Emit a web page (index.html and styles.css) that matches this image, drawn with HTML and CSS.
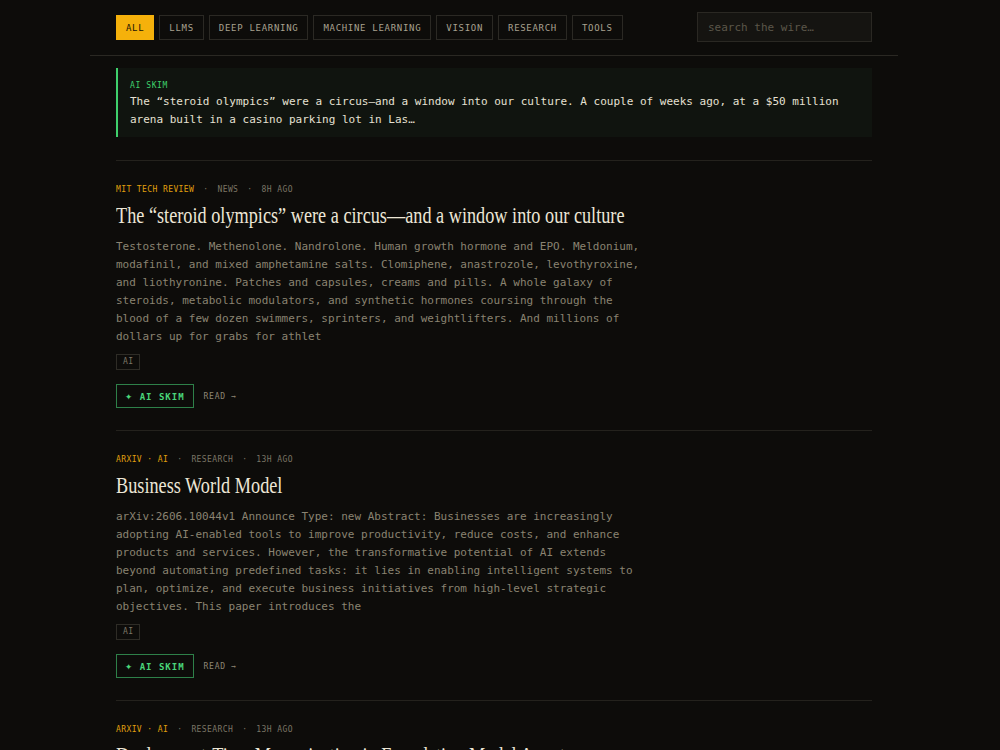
FILE: index.html
```html
<!DOCTYPE html>
<html>
<head>
<title>The Wire</title>
<link rel="stylesheet" href="styles.css">
</head>
<body>
<div class="page">
  <div class="header">
    <div class="tabs">
      <button class="tab active">ALL</button>
      <button class="tab">LLMS</button>
      <button class="tab">DEEP LEARNING</button>
      <button class="tab">MACHINE LEARNING</button>
      <button class="tab">VISION</button>
      <button class="tab">RESEARCH</button>
      <button class="tab">TOOLS</button>
    </div>
    <input type="text" class="search" placeholder="search the wire…">
  </div>

  <div class="main">
    <div class="skim">
      <div class="skim-label">AI SKIM</div>
      <div class="skim-text">The “steroid olympics” were a circus—and a window into our culture. A couple of weeks ago, at a $50 million arena built in a casino parking lot in Las…</div>
    </div>

    <div class="article">
      <div class="meta">
        <span class="source">MIT TECH REVIEW</span>
        <span class="dot">·</span>
        <span>NEWS</span>
        <span class="dot">·</span>
        <span>8H AGO</span>
      </div>
      <div class="title"><span>The “steroid olympics” were a circus—and a window into our culture</span></div>
      <div class="excerpt">Testosterone. Methenolone. Nandrolone. Human growth hormone and EPO. Meldonium, modafinil, and mixed amphetamine salts. Clomiphene, anastrozole, levothyroxine, and liothyronine. Patches and capsules, creams and pills. A whole galaxy of steroids, metabolic modulators, and synthetic hormones coursing through the blood of a few dozen swimmers, sprinters, and weightlifters. And millions of dollars up for grabs for athlet</div>
      <div class="tags"><span class="tag">AI</span></div>
      <div class="actions">
        <button class="skim-btn"><span class="spark">✦</span> AI SKIM</button>
        <a class="read">READ →</a>
      </div>
    </div>

    <div class="article">
      <div class="meta">
        <span class="source">ARXIV · AI</span>
        <span class="dot">·</span>
        <span>RESEARCH</span>
        <span class="dot">·</span>
        <span>13H AGO</span>
      </div>
      <div class="title"><span>Business World Model</span></div>
      <div class="excerpt">arXiv:2606.10044v1 Announce Type: new Abstract: Businesses are increasingly adopting AI-enabled tools to improve productivity, reduce costs, and enhance products and services. However, the transformative potential of AI extends beyond automating predefined tasks: it lies in enabling intelligent systems to plan, optimize, and execute business initiatives from high-level strategic objectives. This paper introduces the</div>
      <div class="tags"><span class="tag">AI</span></div>
      <div class="actions">
        <button class="skim-btn"><span class="spark">✦</span> AI SKIM</button>
        <a class="read">READ →</a>
      </div>
    </div>

    <div class="article">
      <div class="meta">
        <span class="source">ARXIV · AI</span>
        <span class="dot">·</span>
        <span>RESEARCH</span>
        <span class="dot">·</span>
        <span>13H AGO</span>
      </div>
      <div class="title"><span>Deployment-Time Memorization in Foundation Model Agents</span></div>
      <div class="excerpt">arXiv:2606.10051v1 Announce Type: new Abstract: Foundation model agents increasingly operate over long horizons.</div>
    </div>
  </div>
</div>
</body>
</html>
```

FILE: styles.css
```css
body {
  margin: 0;
  padding-right: 12px;
  background-color: #0d0c0a;
  color: #e8e3d5;
  font-family: "DejaVu Sans Mono", "Liberation Mono", monospace;
  overflow: hidden;
}

.page {
  max-width: 808px;
  margin: 0 auto;
}

.header {
  display: flex;
  justify-content: space-between;
  align-items: center;
  padding: 12px 26px 13px;
  border-bottom: 1px solid #2a2823;
}

.tabs {
  display: flex;
  gap: 5px;
  padding-top: 1px;
}

.tab {
  height: 25px;
  padding: 0 9px;
  background: transparent;
  border: 1px solid #2b2924;
  color: #a8a18f;
  font-family: inherit;
  font-size: 9px;
  letter-spacing: 0.7px;
  cursor: pointer;
}

.tab.active {
  background-color: #f5b10b;
  border-color: #f5b10b;
  color: #1a1406;
}

.search {
  width: 175px;
  height: 30px;
  box-sizing: border-box;
  padding: 0 10px;
  background-color: #151411;
  border: 1px solid #2a2823;
  color: #e8e3d5;
  font-family: inherit;
  font-size: 11px;
  outline: none;
}

.search::placeholder {
  color: #5b5649;
}

.main {
  padding: 12px 26px 0;
}

.skim {
  background-color: #10140f;
  border-left: 2px solid #3fd06c;
  padding: 12px 14px 8px 12px;
  margin-bottom: 23px;
}

.skim-label {
  color: #3fd06c;
  font-size: 8px;
  letter-spacing: 0.6px;
  line-height: 12px;
  margin-bottom: 1px;
}

.skim-text {
  font-size: 11px;
  line-height: 18px;
  color: #e6e1d3;
}

.article {
  border-top: 1px solid #24221d;
  padding: 23px 0 22px;
}

.meta {
  display: flex;
  gap: 9px;
  font-size: 8px;
  letter-spacing: 0.4px;
  line-height: 12px;
  color: #7b7565;
}

.source {
  color: #e0a00e;
}

.title {
  margin-top: 5px;
  font-family: "Liberation Serif", serif;
  font-size: 24px;
  line-height: 28px;
  color: #ece6d6;
  white-space: nowrap;
}

.title span {
  display: inline-block;
  transform: scaleX(0.76);
  transform-origin: left;
}

.excerpt {
  margin-top: 9px;
  max-width: 530px;
  font-size: 11px;
  line-height: 18px;
  color: #8a8371;
}

.tags {
  margin-top: 8px;
  display: flex;
}

.tag {
  height: 16px;
  box-sizing: border-box;
  padding: 0 6px;
  border: 1px solid #2e2c26;
  font-size: 8px;
  line-height: 14px;
  letter-spacing: 0.4px;
  color: #7b7565;
}

.actions {
  margin-top: 14px;
  display: flex;
  align-items: center;
  gap: 10px;
}

.skim-btn {
  height: 24px;
  padding: 0 8px;
  background: transparent;
  border: 1px solid #2e8049;
  color: #4ad57a;
  font-family: inherit;
  font-size: 9px;
  font-weight: bold;
  letter-spacing: 1px;
  cursor: pointer;
}

.spark {
  font-size: 12px;
  line-height: 1;
}

.read {
  color: #8d8674;
  font-size: 8px;
  letter-spacing: 0.7px;
  cursor: pointer;
}
```
